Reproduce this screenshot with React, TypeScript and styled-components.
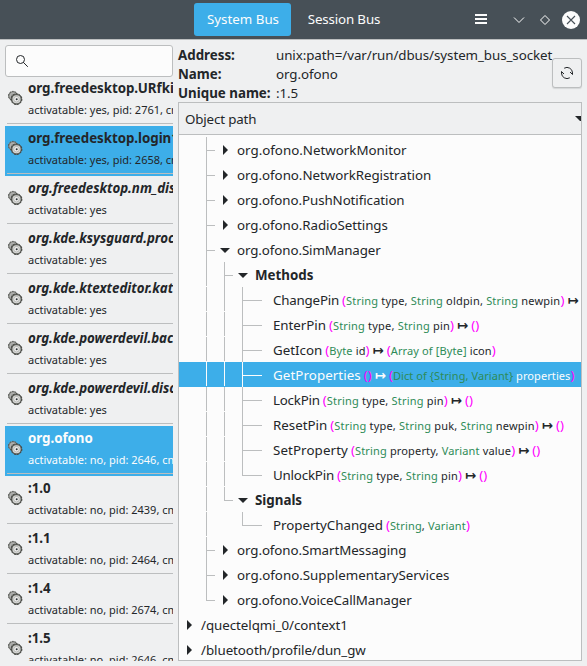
import React from "react";
import styled, { createGlobalStyle, css } from "styled-components";

const GlobalStyle = createGlobalStyle`
  * { box-sizing: border-box; }
  body {
    margin: 0;
    background: #eff0f1;
    color: #232629;
    font-family: "Noto Sans", "DejaVu Sans", sans-serif;
    font-size: 13.333px;
    overflow: hidden;
  }
`;

const Window = styled.div`
  width: 587px;
  height: 666px;
  display: flex;
  flex-direction: column;
  overflow: hidden;
  background: #eff0f1;
`;

const HeaderBar = styled.header`
  height: 40px;
  flex: none;
  display: flex;
  align-items: flex-start;
  padding: 3px 7px 0 194px;
  background: #475057;
  border-bottom: 1px solid #bcbebf;
`;

const BusTab = styled.button<{ $active?: boolean }>`
  width: 97px;
  height: 33px;
  margin-right: 4px;
  padding: 0 0 0 1px;
  border: 0;
  border-radius: 3px;
  background: ${(p) => (p.$active ? "#3daee9" : "transparent")};
  color: #fcfcfc;
  font: inherit;
  line-height: 33px;
  letter-spacing: ${(p) => (p.$active ? 0 : -0.15)}px;
  white-space: nowrap;
`;

const WindowControls = styled.div`
  flex: 1;
  height: 33px;
  display: flex;
  justify-content: flex-end;
  align-items: center;
`;

const ControlIcon = styled.svg<{ $gap?: number }>`
  display: block;
  flex: none;
  margin-left: ${(p) => p.$gap ?? 8}px;
`;

const Body = styled.main`
  flex: 1;
  min-height: 0;
  display: flex;
  padding: 5px;
  gap: 5px;
`;

const Sidebar = styled.aside`
  width: 168px;
  flex: none;
  display: flex;
  flex-direction: column;
`;

const SearchBox = styled.div`
  height: 32px;
  flex: none;
  display: flex;
  align-items: center;
  padding-left: 9px;
  background: #fcfcfc;
  border: 1px solid #bcbebf;
  border-radius: 3px;
`;

const ServiceList = styled.div`
  flex: 1;
  min-height: 0;
  overflow: hidden;
`;

const ServiceScroll = styled.div`
  margin-top: -1px;
`;

const ServiceRow = styled.div<{ $selected?: boolean; $light?: boolean }>`
  height: 50px;
  display: flex;
  padding: 0 0 2px 2px;
  background: ${(p) => (p.$selected ? "#3daee9" : "transparent")};
  color: ${(p) => (p.$light ? "#fcfcfc" : "#232629")};
`;

const ServiceContent = styled.div`
  flex: 1;
  min-width: 0;
  display: flex;
  align-items: flex-start;
  overflow: hidden;
  border-bottom: 1px solid #bcbebf;
`;

const ServiceIcon = styled.svg`
  flex: none;
  margin: 14px 5px 0 1px;
`;

const ServiceText = styled.div`
  white-space: nowrap;
`;

const ServiceName = styled.div<{ $italic?: boolean }>`
  height: 20px;
  padding-top: 3px;
  line-height: 18px;
  font-weight: 700;
  font-style: ${(p) => (p.$italic ? "italic" : "normal")};
  letter-spacing: -0.04px;
`;

const ServiceMeta = styled.div`
  padding-top: 6px;
  font-size: 11px;
  line-height: 16px;
`;

const Content = styled.section`
  flex: 1;
  min-width: 0;
  display: flex;
  flex-direction: column;
`;

const InfoBar = styled.div`
  height: 57px;
  flex: none;
  display: flex;
  justify-content: space-between;
  align-items: center;
`;

const InfoGrid = styled.dl`
  margin: 1px 0 0;
  display: grid;
  grid-template-columns: 98px 276px;
  grid-auto-rows: 19px;
  line-height: 19px;
  white-space: nowrap;
`;

const InfoLabel = styled.dt`
  font-weight: 700;
`;

const InfoValue = styled.dd`
  margin: 0;
  letter-spacing: -0.06px;
`;

const RefreshButton = styled.button`
  width: 30px;
  height: 30px;
  flex: none;
  margin-top: -1px;
  padding: 0;
  display: flex;
  align-items: center;
  justify-content: center;
  background: #eff0f1;
  border: 1px solid #bcbebf;
  border-radius: 3px;
  box-shadow: 0 1px 1px #d4d6d7;
`;

const TreeFrame = styled.div`
  width: 404px;
  flex: 1;
  min-height: 0;
  display: flex;
  flex-direction: column;
  overflow: hidden;
  border: 1px solid #bcbebf;
  background: #fcfcfc;
`;

const TreeHeader = styled.div`
  height: 32px;
  flex: none;
  display: flex;
  align-items: center;
  justify-content: space-between;
  padding-left: 6px;
  background: #eff0f1;
  border-bottom: 1px solid #bcbebf;
  letter-spacing: -0.15px;
`;

const TreeRows = styled.div`
  padding-top: 2px;
`;

const TreeRow = styled.div<{ $selected?: boolean }>`
  height: 25px;
  display: flex;
  padding-left: 1px;
  white-space: nowrap;
  line-height: 27px;
  background: ${(p) => (p.$selected ? "#3daee9" : "transparent")};
  color: ${(p) => (p.$selected ? "#fcfcfc" : "#232629")};
  --guide: ${(p) => (p.$selected ? "#fcfcfc" : "#bcbebf")};
`;

type GuideKind = "none" | "line" | "tee" | "end";

const Guide = styled.span<{ $kind: GuideKind; $arm: number }>`
  width: 18px;
  height: 25px;
  flex: none;
  padding-left: 8px;
  ${(p) =>
    p.$kind !== "none" &&
    css`
      &::before {
        content: "";
        display: block;
        width: ${p.$kind === "line" ? 1 : p.$arm}px;
        height: ${p.$kind === "line" ? 24 : 13}px;
        border-left: 1px solid var(--guide);
        border-bottom: ${p.$kind === "line" ? "0" : "1px solid var(--guide)"};
      }
    `}
  ${(p) =>
    p.$kind === "tee" &&
    css`
      &::after {
        content: "";
        display: block;
        width: 1px;
        height: 11px;
        background: var(--guide);
      }
    `}
`;

const Expander = styled.span`
  width: 18px;
  height: 25px;
  flex: none;
  margin-right: 3px;
  display: flex;
`;

const Label = styled.span<{ $bold?: boolean; $track?: number }>`
  font-weight: ${(p) => (p.$bold ? 700 : 400)};
  letter-spacing: ${(p) => p.$track ?? 0}px;
`;

const Signature = styled.span<{ $track?: number }>`
  margin-left: 3px;
  font-size: 11px;
  letter-spacing: ${(p) => p.$track ?? 0.2}px;
`;

const Paren = styled.span`
  color: #ff00ff;
  font-size: 13.333px;
  letter-spacing: 0;
`;

const TypeName = styled.span`
  color: #2e8b57;
`;

const Arrow = styled.span`
  font-weight: 700;
  font-size: 13.333px;
  letter-spacing: 0;
`;

const GearsIcon = () => (
  <ServiceIcon width="15" height="17" viewBox="0 0 15 17">
    <circle cx="5" cy="5.9" r="4.1" fill="#b0b1af" stroke="#8a8c88" strokeWidth="1.2" />
    <circle cx="5" cy="5.9" r="4.5" fill="none" stroke="#4d4f4b" strokeWidth="1" strokeDasharray="1.8 1" />
    <circle cx="5" cy="5.9" r="2" fill="#8f918d" />
    <circle cx="8.5" cy="9.2" r="4.8" fill="#dcdddb" stroke="#62645f" strokeWidth="1.5" />
    <circle cx="8.5" cy="9.2" r="5.4" fill="none" stroke="#3c3e3a" strokeWidth="1" strokeDasharray="2 1" />
    <circle cx="8.5" cy="9.2" r="2.8" fill="#f0f0ef" stroke="#a8aaa6" strokeWidth=".8" />
    <circle cx="8.7" cy="9.2" r="1" fill="#2e3436" />
  </ServiceIcon>
);

const ExpanderArrow = ({ open }: { open: boolean }) => (
  <svg width="18" height="25" viewBox="0 0 18 25" fill="#232629">
    <path d={open ? "M4 11h10l-5 5z" : "M7 8l5 5-5 5z"} />
  </svg>
);

interface Service {
  name: string;
  meta: string;
  italic?: boolean;
  selected?: boolean;
  light?: boolean;
}

const services: Service[] = [
  { name: "org.freedesktop.URfkill", meta: "activatable: yes, pid: 2761, cmd" },
  { name: "org.freedesktop.login1", meta: "activatable: yes, pid: 2658, cmd", selected: true },
  { name: "org.freedesktop.nm_dispatcher", meta: "activatable: yes", italic: true },
  { name: "org.kde.ksysguard.processlist", meta: "activatable: yes", italic: true },
  { name: "org.kde.ktexteditor.katetext", meta: "activatable: yes", italic: true },
  { name: "org.kde.powerdevil.backlight", meta: "activatable: yes", italic: true },
  { name: "org.kde.powerdevil.discrete", meta: "activatable: yes", italic: true },
  { name: "org.ofono", meta: "activatable: no, pid: 2646, cmd", selected: true, light: true },
  { name: ":1.0", meta: "activatable: no, pid: 2439, cmd" },
  { name: ":1.1", meta: "activatable: no, pid: 2464, cmd" },
  { name: ":1.4", meta: "activatable: no, pid: 2674, cmd" },
  { name: ":1.5", meta: "activatable: no, pid: 2646, cmd" },
];

type Arg = [type: string, name?: string];

interface Node {
  label: string;
  guides: GuideKind[];
  track?: number;
  signatureTrack?: number;
  open?: boolean;
  leaf?: boolean;
  bold?: boolean;
  selected?: boolean;
  input?: Arg[];
  output?: Arg[];
}

const iface = (name: string, track = 0, last = false): Node => ({
  label: "org.ofono." + name,
  guides: ["none", last ? "end" : "tee"],
  track,
});

const method = (label: string, track: number, input: Arg[], output: Arg[] = [], extra: Partial<Node> = {}): Node => ({
  label,
  track,
  guides: ["none", "line", "line", "tee"],
  leaf: true,
  input,
  output,
  ...extra,
});

const nodes: Node[] = [
  iface("NetworkMonitor"),
  iface("NetworkRegistration", -0.04),
  iface("PushNotification", -0.08),
  iface("RadioSettings", -0.05),
  { ...iface("SimManager", -0.09), open: true },
  { label: "Methods", guides: ["none", "line", "tee"], open: true, bold: true },
  method("ChangePin", -0.2, [["String", "type"], ["String", "oldpin"], ["String", "newpin"]]),
  method("EnterPin", -0.04, [["String", "type"], ["String", "pin"]]),
  method("GetIcon", 0, [["Byte", "id"]], [["Array of [Byte]", "icon"]], { signatureTrack: 0.13 }),
  method("GetProperties", 0.08, [], [["Dict of {String, Variant}", "properties"]], {
    selected: true,
    signatureTrack: 0.08,
  }),
  method("LockPin", -0.22, [["String", "type"], ["String", "pin"]]),
  method("ResetPin", 0, [["String", "type"], ["String", "puk"], ["String", "newpin"]]),
  method("SetProperty", 0.1, [["String", "property"], ["Variant", "value"]], [], { signatureTrack: 0.16 }),
  method("UnlockPin", -0.2, [["String", "type"], ["String", "pin"]], [], { guides: ["none", "line", "line", "end"] }),
  { label: "Signals", guides: ["none", "line", "end"], open: true, bold: true },
  {
    label: "PropertyChanged",
    track: -0.04,
    signatureTrack: 0.16,
    guides: ["none", "line", "none", "end"],
    leaf: true,
    input: [["String"], ["Variant"]],
  },
  iface("SmartMessaging", -0.08),
  iface("SupplementaryServices"),
  iface("VoiceCallManager", -0.11, true),
  { label: "/quectelqmi_0/context1", guides: [], track: -0.05 },
  { label: "/bluetooth/profile/dun_gw", guides: [], track: -0.05 },
];

const Args = ({ args }: { args: Arg[] }) => (
  <>
    <Paren>(</Paren>
    {args.map(([type, name], i) => (
      <React.Fragment key={i}>
        {i > 0 && ", "}
        <TypeName>{type}</TypeName>
        {name && " " + name}
      </React.Fragment>
    ))}
    <Paren>)</Paren>
  </>
);

export default function App() {
  return (
    <Window>
      <GlobalStyle />
      <HeaderBar>
        <BusTab $active>System Bus</BusTab>
        <BusTab>Session Bus</BusTab>
        <WindowControls>
          <ControlIcon width="12" height="12" viewBox="0 0 12 12">
            <path d="M0 1h12M0 5h12M0 9h12" stroke="#fcfcfc" strokeWidth="2" />
          </ControlIcon>
          <ControlIcon $gap={23} width="18" height="18" viewBox="0 0 18 18" fill="none" stroke="#fcfcfc">
            <path d="M4 6.5l5 5 5-5" />
          </ControlIcon>
          <ControlIcon width="18" height="18" viewBox="0 0 18 18" fill="none" stroke="#fcfcfc">
            <path d="M9 4.5L13.5 9 9 13.5 4.5 9z" />
          </ControlIcon>
          <ControlIcon width="18" height="18" viewBox="0 0 18 18">
            <circle cx="9" cy="9" r="9" fill="#fcfcfc" />
            <path d="M5 5l8 8M13 5l-8 8" stroke="#475057" strokeWidth="1.1" />
          </ControlIcon>
        </WindowControls>
      </HeaderBar>
      <Body>
        <Sidebar>
          <SearchBox>
            <svg width="14" height="14" viewBox="0 0 14 14" fill="none" stroke="#232629" strokeWidth="1">
              <circle cx="5.5" cy="5.5" r="4" />
              <path d="M8.3 8.3l4.5 4.5" />
            </svg>
          </SearchBox>
          <ServiceList>
            <ServiceScroll>
              {services.map((s) => (
                <ServiceRow key={s.name} $selected={s.selected} $light={s.light}>
                  <ServiceContent>
                    <GearsIcon />
                    <ServiceText>
                      <ServiceName $italic={s.italic}>{s.name}</ServiceName>
                      <ServiceMeta>{s.meta}</ServiceMeta>
                    </ServiceText>
                  </ServiceContent>
                </ServiceRow>
              ))}
            </ServiceScroll>
          </ServiceList>
        </Sidebar>
        <Content>
          <InfoBar>
            <InfoGrid>
              <InfoLabel>Address:</InfoLabel>
              <InfoValue>unix:path=/var/run/dbus/system_bus_socket</InfoValue>
              <InfoLabel>Name:</InfoLabel>
              <InfoValue>org.ofono</InfoValue>
              <InfoLabel>Unique name:</InfoLabel>
              <InfoValue>:1.5</InfoValue>
            </InfoGrid>
            <RefreshButton aria-label="Refresh">
              <svg width="14" height="14" viewBox="0 0 14 14" fill="none" stroke="#232629" strokeWidth="1">
                <path d="M4.2 2.2A5.5 5.5 0 0 1 12.5 7v1.5M12.5 8.5L10 6M9.8 11.8A5.5 5.5 0 0 1 1.5 7V5.5M1.5 5.5L4 8" />
              </svg>
            </RefreshButton>
          </InfoBar>
          <TreeFrame>
            <TreeHeader>
              Object path
              <svg width="6" height="5" viewBox="0 0 6 5">
                <path d="M0 0h6v5H5z" fill="#232629" />
              </svg>
            </TreeHeader>
            <TreeRows>
              {nodes.map((n) => (
                <TreeRow key={n.label} $selected={n.selected}>
                  {n.guides.map((g, i) => (
                    <Guide key={i} $kind={g} $arm={n.leaf ? 19 : 8} />
                  ))}
                  <Expander>{!n.leaf && <ExpanderArrow open={!!n.open} />}</Expander>
                  <Label $bold={n.bold} $track={n.track}>
                    {n.label}
                  </Label>
                  {n.input && (
                    <Signature $track={n.signatureTrack}>
                      <Args args={n.input} />
                      {n.output && (
                        <>
                          {" "}
                          <Arrow>↦</Arrow> <Args args={n.output} />
                        </>
                      )}
                    </Signature>
                  )}
                </TreeRow>
              ))}
            </TreeRows>
          </TreeFrame>
        </Content>
      </Body>
    </Window>
  );
}
